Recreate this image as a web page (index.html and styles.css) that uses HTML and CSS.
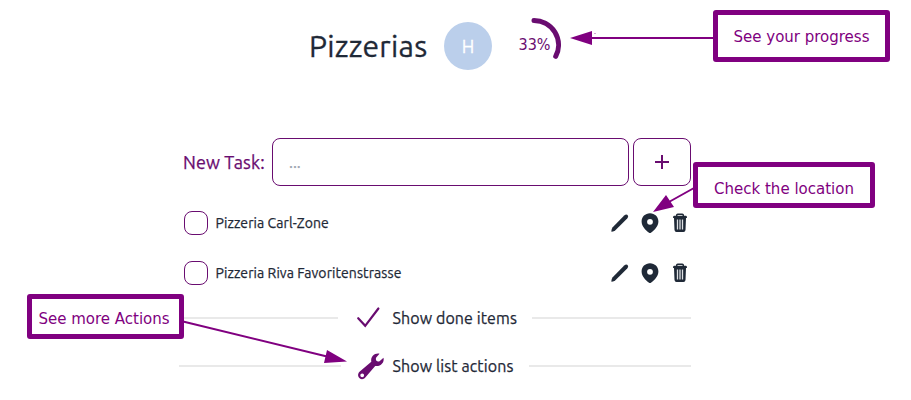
FILE: index.html
```
<!DOCTYPE html>
<html lang="en">
<head>
<meta charset="utf-8">
<title>Pizzerias</title>
<link rel="stylesheet" href="styles.css">
</head>
<body>
<svg class="defs" aria-hidden="true">
  <symbol id="pencil" viewBox="0 0 20 20"><path d="M1.300 18.600Q1 16.500 2.700 14.300L14.200 2.600Q16.200 .8 17.600 2.100 19 3.600 17.200 5.600L5.400 17.200Q3.500 18.900 1.300 18.600Z"/></symbol>
  <symbol id="pin" viewBox="0 0 20 20"><path fill-rule="evenodd" d="M10 .2C5.200.2 1.600 3.800 1.600 8.400c0 5 4.400 9.100 8.400 12 4-2.900 8.400-7 8.400-12C18.400 3.800 14.800.2 10 .2ZM10 5.900a2.900 2.900 0 1 1 0 5.800 2.900 2.900 0 0 1 0-5.800Z"/></symbol>
  <symbol id="trash" viewBox="0 0 20 20"><path fill="none" stroke="currentColor" stroke-width="1.500" d="M6.700 4V2.200Q6.700 1.200 7.700 1.200H12.300Q13.300 1.200 13.300 2.200V4"/><path d="M4 2.800H16Q17 2.900 17 5H3Q3 2.900 4 2.800ZM4 5H16L15.500 17Q15.300 19 13.500 19H6.500Q4.700 19 4.500 17Z"/><path fill="none" stroke="#dfe1e4" stroke-width="1.300" d="M7.500 6.500V16.500M10 6.500V16.500M12.500 6.500V16.500"/></symbol>
</svg>
<main class="page">
  <header class="header">
    <h1 class="title">Pizzerias</h1>
    <div class="avatar">H</div>
    <div class="progress">
      <svg class="ring" viewBox="0 0 54 54"><path d="M27 2.500A24.500 24.500 0 0 1 48.700 38.400"/></svg>
      <span class="percent">33%</span>
    </div>
  </header>
  <form class="new-task">
    <label class="label" for="task">New Task:</label>
    <input class="field" id="task" placeholder="...">
    <button class="add" type="button" aria-label="Add"><svg viewBox="0 0 14 14"><path d="M7 0V14M0 7H14"/></svg></button>
  </form>
  <ul class="tasks">
    <li class="task"><span class="check"></span><span class="name">Pizzeria Carl-Zone</span>
      <span class="tools"><svg><use href="#pencil"/></svg><svg><use href="#pin"/></svg><svg><use href="#trash"/></svg></span></li>
    <li class="task"><span class="check"></span><span class="name">Pizzeria Riva Favoritenstrasse</span>
      <span class="tools"><svg><use href="#pencil"/></svg><svg><use href="#pin"/></svg><svg><use href="#trash"/></svg></span></li>
  </ul>
  <div class="divider">
    <svg class="tick" viewBox="0 0 26 26"><path d="M2.200 13.200 9.200 20.800 22.400 3.500"/></svg>
    <span class="action">Show done items</span>
  </div>
  <div class="divider">
    <svg class="wrench" viewBox="0 0 26 26"><path fill-rule="evenodd" d="M21.500 .7C17 -.2 12.300 3.300 13.300 8.700L1.500 18.800C-.5 20.800-.2 23.800 1.600 25.200 3.300 26.800 5.800 26.400 7.300 24.500L17.200 12.900C22.300 13.700 26.700 9.700 25.500 4.700L21.500 8.200Q19.500 8.800 18.200 7.500 17.400 6 18.200 4.400ZM4.200 20.400a1.900 1.900 0 1 1 0 3.800 1.900 1.900 0 0 1 0-3.800Z"/></svg>
    <span class="action">Show list actions</span>
  </div>
  <svg class="arrows" viewBox="0 0 911 400">
    <path class="shaft" d="M714 38H590M694 188 668 202.500M183 321.500 327 356.500"/>
    <path d="M570 38 592 31V45ZM653 212 666 195 674 207ZM347 361.500 327 350 324 363Z"/>
    <path class="speck" d="M594 33H596V34H594Z"/>
  </svg>
  <aside class="callout see-progress">See your progress</aside>
  <aside class="callout check-location">Check the location</aside>
  <aside class="callout more-actions">See more Actions</aside>
</main>
</body>
</html>
```
FILE: styles.css
```
* { box-sizing: border-box; }
body { margin: 0; background: #fff; color: #1f2937; font-family: Ubuntu, "Noto Sans", sans-serif; }
.defs { position: absolute; width: 0; height: 0; }
.page { position: relative; width: 911px; height: 400px; overflow: hidden; padding: 17px 220px 0 179px; }
svg { display: block; }
.header { display: flex; align-items: center; height: 58px; padding-left: 130px; }
.title { width: 135px; margin: 0; font-size: 30px; font-weight: 400; line-height: 40px; letter-spacing: .25px; white-space: nowrap; -webkit-text-stroke: .3px; }
.avatar { width: 48px; height: 48px; border-radius: 50%; background: #bbcfeb; color: #fff; font-size: 18px; line-height: 49px; text-align: center; -webkit-text-stroke: .3px; }
.progress { display: grid; width: 54px; height: 54px; margin: -2px 0 0 15px; place-items: center; }
.ring, .percent { grid-area: 1 / 1; }
.ring { width: 54px; height: 54px; fill: none; stroke: #690c70; stroke-width: 5; stroke-linecap: round; }
.percent { color: #690c70; font: 16px/20px "DejaVu Sans Condensed", "DejaVu Sans", sans-serif; font-stretch: condensed; margin: -1px 0 0 1px; }
.new-task { display: flex; align-items: center; height: 48px; margin: 63px 0 0; padding-left: 4px; }
.label { width: 89px; color: #690c70; font-size: 18px; letter-spacing: .1px; white-space: nowrap; -webkit-text-stroke: .25px; }
.field { width: 357px; height: 48px; border: 1px solid #690c70; border-radius: 8px; padding: 0 16px; font: 16px Ubuntu, "Noto Sans", sans-serif; }
.field::placeholder { color: #9ca3af; -webkit-text-stroke: .25px; }
.add { display: grid; place-items: center; width: 58px; height: 48px; margin-left: 4px; padding: 0; border: 1px solid #690c70; border-radius: 8px; background: #fff; }
.add svg { width: 14px; height: 14px; stroke: #690c70; stroke-width: 2; }
.tasks { list-style: none; margin: 12px 0 0; padding: 0 0 0 5px; }
.task { display: flex; align-items: center; height: 50px; }
.check { width: 24px; height: 24px; border: 1px solid #690c70; border-radius: 8px; }
.name { margin-left: 7.500px; font-size: 14px; line-height: 20px; letter-spacing: .08px; white-space: nowrap; -webkit-text-stroke: .25px; }
.tools { display: flex; gap: 10px; margin-left: auto; padding-right: 1px; }
.tools svg { width: 20px; height: 20px; fill: currentColor; overflow: visible; }
.divider { display: flex; align-items: center; height: 48px; }
.tasks + .divider { margin-top: -4px; }
.divider::before, .divider::after { content: ""; flex: 1; height: 2px; background: #e9e9e9; }
.tick, .wrench { width: 26px; height: 26px; margin: 0 10px 0 18.500px; overflow: visible; }
.wrench { margin: 0 9px 0 17px; }
.tick { fill: none; stroke: #690c70; stroke-width: 2.200; stroke-linecap: round; }
.wrench { fill: #690c70; }
.action { font-size: 16px; line-height: 24px; letter-spacing: .1px; margin-right: 15px; white-space: nowrap; -webkit-text-stroke: .25px; }
.wrench + .action { margin-right: 16px; }
.arrows { position: absolute; inset: 0; width: 911px; height: 400px; fill: #800080; }
.shaft { fill: none; stroke: #800080; stroke-width: 2; }
.speck { opacity: .35; }
.callout { position: absolute; border: 5px solid #800080; border-radius: 3px; background: #fff; color: #800080; font: 16.700px/20px "DejaVu Sans Condensed", "DejaVu Sans", sans-serif; font-stretch: condensed; text-align: center; white-space: nowrap; }
.see-progress { left: 713px; top: 10px; width: 177px; height: 52px; padding-top: 11px; }
.check-location { left: 693px; top: 162px; width: 182px; height: 46px; padding-top: 11px; }
.more-actions { left: 27px; top: 294px; width: 157px; height: 45px; padding-top: 9px; padding-right: 3px; }
```
